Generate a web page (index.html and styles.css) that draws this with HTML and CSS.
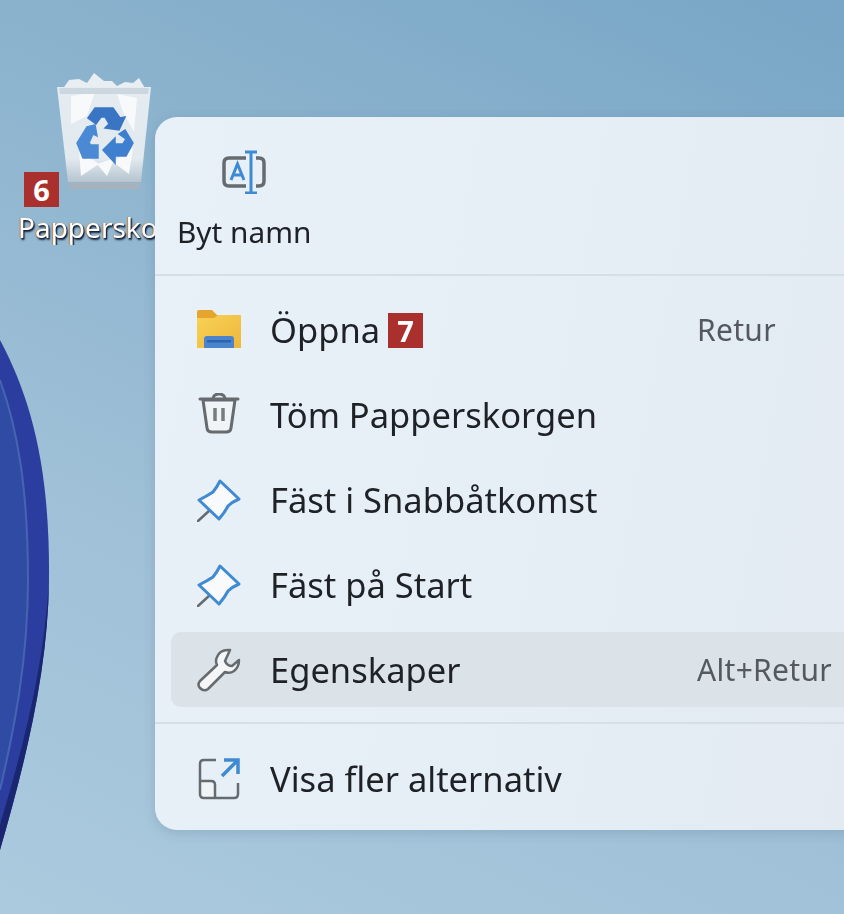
FILE: index.html
```html
<!DOCTYPE html>
<html lang="sv">
<head>
<meta charset="utf-8">
<title>Papperskorgen</title>
<link rel="stylesheet" href="styles.css">
</head>
<body>
<main class="desktop">
  <svg class="swoosh" viewBox="0 0 60 600" aria-hidden="true">
    <path fill="#2b3d9e" d="M0 0C32 60 50 130 49 240C48 330 26 420 0 510Z"/>
    <path fill="#1a2670" d="M49 240C48 330 26 420 0 510L0 485C22 410 44 330 49 240Z"/>
    <path fill="#304ba4" d="M0 40C18 90 28 150 28 240C28 320 14 390 0 450Z"/>
    <path fill="none" stroke="#4764b2" stroke-width="2" d="M0 40C18 90 28 150 28 240C28 320 14 390 0 450"/>
  </svg>

  <div class="bin">
    <svg class="bin-icon" viewBox="0 0 94 118" aria-hidden="true">
      <defs>
        <linearGradient id="binGlass" x1="0" y1="0" x2="0" y2="1">
          <stop offset="0" stop-color="#e4ecf1"/>
          <stop offset="0.75" stop-color="#e2eaef"/>
          <stop offset="1" stop-color="#b6c4cf"/>
        </linearGradient>
      </defs>
      <path fill="#e9eef2" d="M5 18L12 8L22 7L30 11L37 1L47 9L55 9L60 14L68 10L76 11L82 6L89 18Z"/>
      <path fill="url(#binGlass)" d="M0 15H94L84 110H11Z"/>
      <path fill="#f7f9fa" d="M14 24L38 20L30 44L14 52ZM60 22L80 26L77 60L66 40ZM22 78L42 92L24 104ZM56 90L76 76L72 102ZM40 92L58 86L50 104Z"/>
      <path fill="#ccd7df" d="M2 16H92L91 22H3Z"/>
      <rect x="12" y="111" width="71" height="6" fill="#a7b2bd"/>
      <path class="arrow-dark" d="M31 46L38 36H56L63 46L68 45L62 58L48 56L52 52L48 45H44L39 52Z"/>
      <path class="arrow-light" d="M30 55L20 71L26 86H41V73H34L32 71L36 62L40 64L38 53Z"/>
      <path class="arrow-mid" d="M68 58L76 71L69 84H58V91L46 78L58 66V72H66L69 67L62 62Z"/>
    </svg>
    <span class="bin-label">Papperskorgen</span>
  </div>
  <span class="tag tag-six">6</span>

  <section class="menu">
    <header class="menu-top">
      <button class="rename">
        <svg class="rename-icon" viewBox="0 0 44 44" aria-hidden="true">
          <path fill="none" stroke="#666b70" stroke-width="3.500" d="M24 8H7Q2 8 2 13V31Q2 36 7 36H24M34 8H37Q42 8 42 13V31Q42 36 37 36H34"/>
          <path fill="none" stroke="#3f8ad2" stroke-width="3" d="M23 2H35M29 2V43M23 43H35"/>
          <path fill="none" stroke="#3f8ad2" stroke-width="3" d="M9 30L15.500 14L22 30M11 25H20"/>
        </svg>
        <span>Byt namn</span>
      </button>
    </header>
    <ul class="items">
      <li class="item">
        <svg class="icon" viewBox="0 0 44 40" aria-hidden="true">
          <defs>
            <linearGradient id="folderFace" x1="0" y1="0" x2="1" y2="1">
              <stop offset="0" stop-color="#f7d257"/>
              <stop offset="1" stop-color="#eeb73a"/>
            </linearGradient>
          </defs>
          <path fill="#e6a52c" d="M0 2Q0 0 2 0H15L20 5H44V14H0Z"/>
          <path fill="url(#folderFace)" d="M0 8H17L21 5H44V38H0Z"/>
          <path fill="#4a84cc" d="M7 38V29Q7 26 10 26H34Q37 26 37 29V38Z"/>
          <rect x="10" y="30" width="24" height="2.500" fill="#2d62ad"/>
        </svg>
        <span class="item-name">Öppna</span>
        <span class="tag tag-seven">7</span>
        <span class="key">Retur</span>
      </li>
      <li class="item">
        <svg class="icon" viewBox="0 0 44 44" aria-hidden="true">
          <path fill="#f1f4f6" stroke="#666b70" stroke-width="3" stroke-linejoin="round" d="M6 7L10 35Q10.500 39 15 39H29Q33.500 39 34 35L38 7Z"/>
          <path fill="none" stroke="#666b70" stroke-width="3" stroke-linecap="round" d="M3 6H41M16 5Q17 1 22 1Q27 1 28 5"/>
          <path fill="none" stroke="#777c80" stroke-width="3.500" d="M18 15V28M26 15V28"/>
        </svg>
        <span class="item-name">Töm Papperskorgen</span>
      </li>
      <li class="item">
        <svg class="icon" viewBox="0 0 44 44" aria-hidden="true">
          <path fill="none" stroke="#666b70" stroke-width="2.500" stroke-linecap="round" d="M1 43L13 32"/>
          <path fill="#f8fafb" stroke="#3f8ad2" stroke-width="3" stroke-linejoin="round" d="M23 3L42 21Q35 24 31 28Q28 34 22 41L2 22Q10 18 16 14Q20 9 23 3Z"/>
        </svg>
        <span class="item-name">Fäst i Snabbåtkomst</span>
      </li>
      <li class="item">
        <svg class="icon" viewBox="0 0 44 44" aria-hidden="true">
          <path fill="none" stroke="#666b70" stroke-width="2.500" stroke-linecap="round" d="M1 43L13 32"/>
          <path fill="#f8fafb" stroke="#3f8ad2" stroke-width="3" stroke-linejoin="round" d="M23 3L42 21Q35 24 31 28Q28 34 22 41L2 22Q10 18 16 14Q20 9 23 3Z"/>
        </svg>
        <span class="item-name">Fäst på Start</span>
      </li>
      <li class="item item-active">
        <svg class="icon" viewBox="0 0 44 44" aria-hidden="true">
          <path fill="#f4f6f7" stroke="#666b70" stroke-width="2.500" stroke-linejoin="round" d="M33 2Q23 1 20 9Q18 13 20 17L3 33Q0 37 3 40Q7 44 11 41L28 24Q33 26 37 23Q42 19 42 12L35 18Q30 18 28 13Z"/>
        </svg>
        <span class="item-name">Egenskaper</span>
        <span class="key">Alt+Retur</span>
      </li>
    </ul>
    <hr class="rule">
    <div class="item item-more">
      <svg class="icon" viewBox="0 0 44 44" aria-hidden="true">
        <path fill="#f1f4f6" d="M3 24H18V41H7Q3 41 3 37Z"/>
        <path fill="none" stroke="#666b70" stroke-width="2.500" d="M19 3H7Q3 3 3 7V37Q3 41 7 41H37Q41 41 41 37V26M3 24H14Q18 24 18 28V41"/>
        <path fill="none" stroke="#3f8ad2" stroke-width="3.500" d="M27 3H41V17M41 3L25 19"/>
      </svg>
      <span class="item-name">Visa fler alternativ</span>
    </div>
  </section>
</main>
</body>
</html>
```
FILE: styles.css
```css
* { box-sizing: border-box; }
html, body { margin: 0; height: 100%; }
body { overflow: hidden; }

.desktop {
  position: relative;
  width: 844px;
  height: 914px;
  overflow: hidden;
  font-family: "Noto Sans", "Open Sans", sans-serif;
  background: linear-gradient(205deg, #78a6c6 0%, #8ab2cd 30%, #9fc0d7 65%, #abcade 100%);
}

.swoosh {
  position: absolute;
  left: 0;
  top: 340px;
  width: 60px;
  height: 600px;
  filter: blur(0.6px);
}

.bin {
  position: absolute;
  left: 0;
  top: 72px;
  width: 155px;
  filter: blur(0.6px);
}
.bin-icon {
  display: block;
  width: 94px;
  height: 118px;
  margin-left: 57px;
}
.arrow-dark { fill: #3a75c4; stroke: #3a75c4; stroke-width: 1.5; }
.arrow-light { fill: #4a8ad4; stroke: #4a8ad4; stroke-width: 1.5; }
.arrow-mid { fill: #3f7fcf; stroke: #3f7fcf; stroke-width: 1.5; }
.bin-label {
  display: block;
  margin: 19px 0 0 18px;
  overflow: hidden;
  font-size: 28px;
  line-height: 36px;
  color: #fff;
  white-space: nowrap;
  text-shadow: 1px 2px 2px #14213a, 1px 1px 1px #1d2c45, -1px 0 1px #d08c40;
}

.tag {
  background: #a9302c;
  color: #fff;
  width: 35px;
  height: 35px;
  display: flex;
  align-items: center;
  justify-content: center;
  font-size: 29px;
  font-weight: 700;
  line-height: 1;
}
.tag-six {
  position: absolute;
  left: 24px;
  top: 172px;
}
.tag-seven {
  margin-left: 8px;
  margin-top: 2px;
}

.menu {
  position: absolute;
  left: 155px;
  top: 117px;
  width: 720px;
  height: 713px;
  background: linear-gradient(100deg, #e7f1f7 0%, #e5eef5 60%, #e3eaf1 100%);
  border-radius: 22px;
  box-shadow: 0 3px 12px rgba(50, 80, 110, 0.18);
  color: #1e2125;
  filter: blur(0.6px);
}
.menu-top {
  height: 159px;
  border-bottom: 2px solid #d6dfe5;
  padding: 33px 0 0 22px;
}
.rename {
  display: flex;
  flex-direction: column;
  align-items: center;
  gap: 19px;
  padding: 0;
  border: 0;
  background: none;
  color: inherit;
  font: inherit;
  font-size: 29.800px;
  line-height: 38px;
}
.rename-icon {
  width: 44px;
  height: 44px;
}
.items {
  list-style: none;
  margin: 0;
  padding: 16px 16px 15px;
  display: flex;
  flex-direction: column;
  gap: 10px;
}
.item {
  display: flex;
  align-items: center;
  height: 75px;
  padding-left: 26px;
  border-radius: 10px;
}
.item-active {
  background: #dbe3e9;
}
.item-more {
  margin: 17px 16px 0;
}
.icon {
  width: 44px;
  height: 44px;
  margin-right: 29px;
  flex: none;
}
.item-name {
  font-size: 34.500px;
  line-height: 44px;
  white-space: nowrap;
}
.key {
  position: absolute;
  left: 542px;
  font-size: 30px;
  letter-spacing: 0.3px;
  color: #55595d;
  white-space: nowrap;
}
.rule {
  margin: 0;
  height: 2px;
  border: 0;
  background: #d6dfe5;
}
```
